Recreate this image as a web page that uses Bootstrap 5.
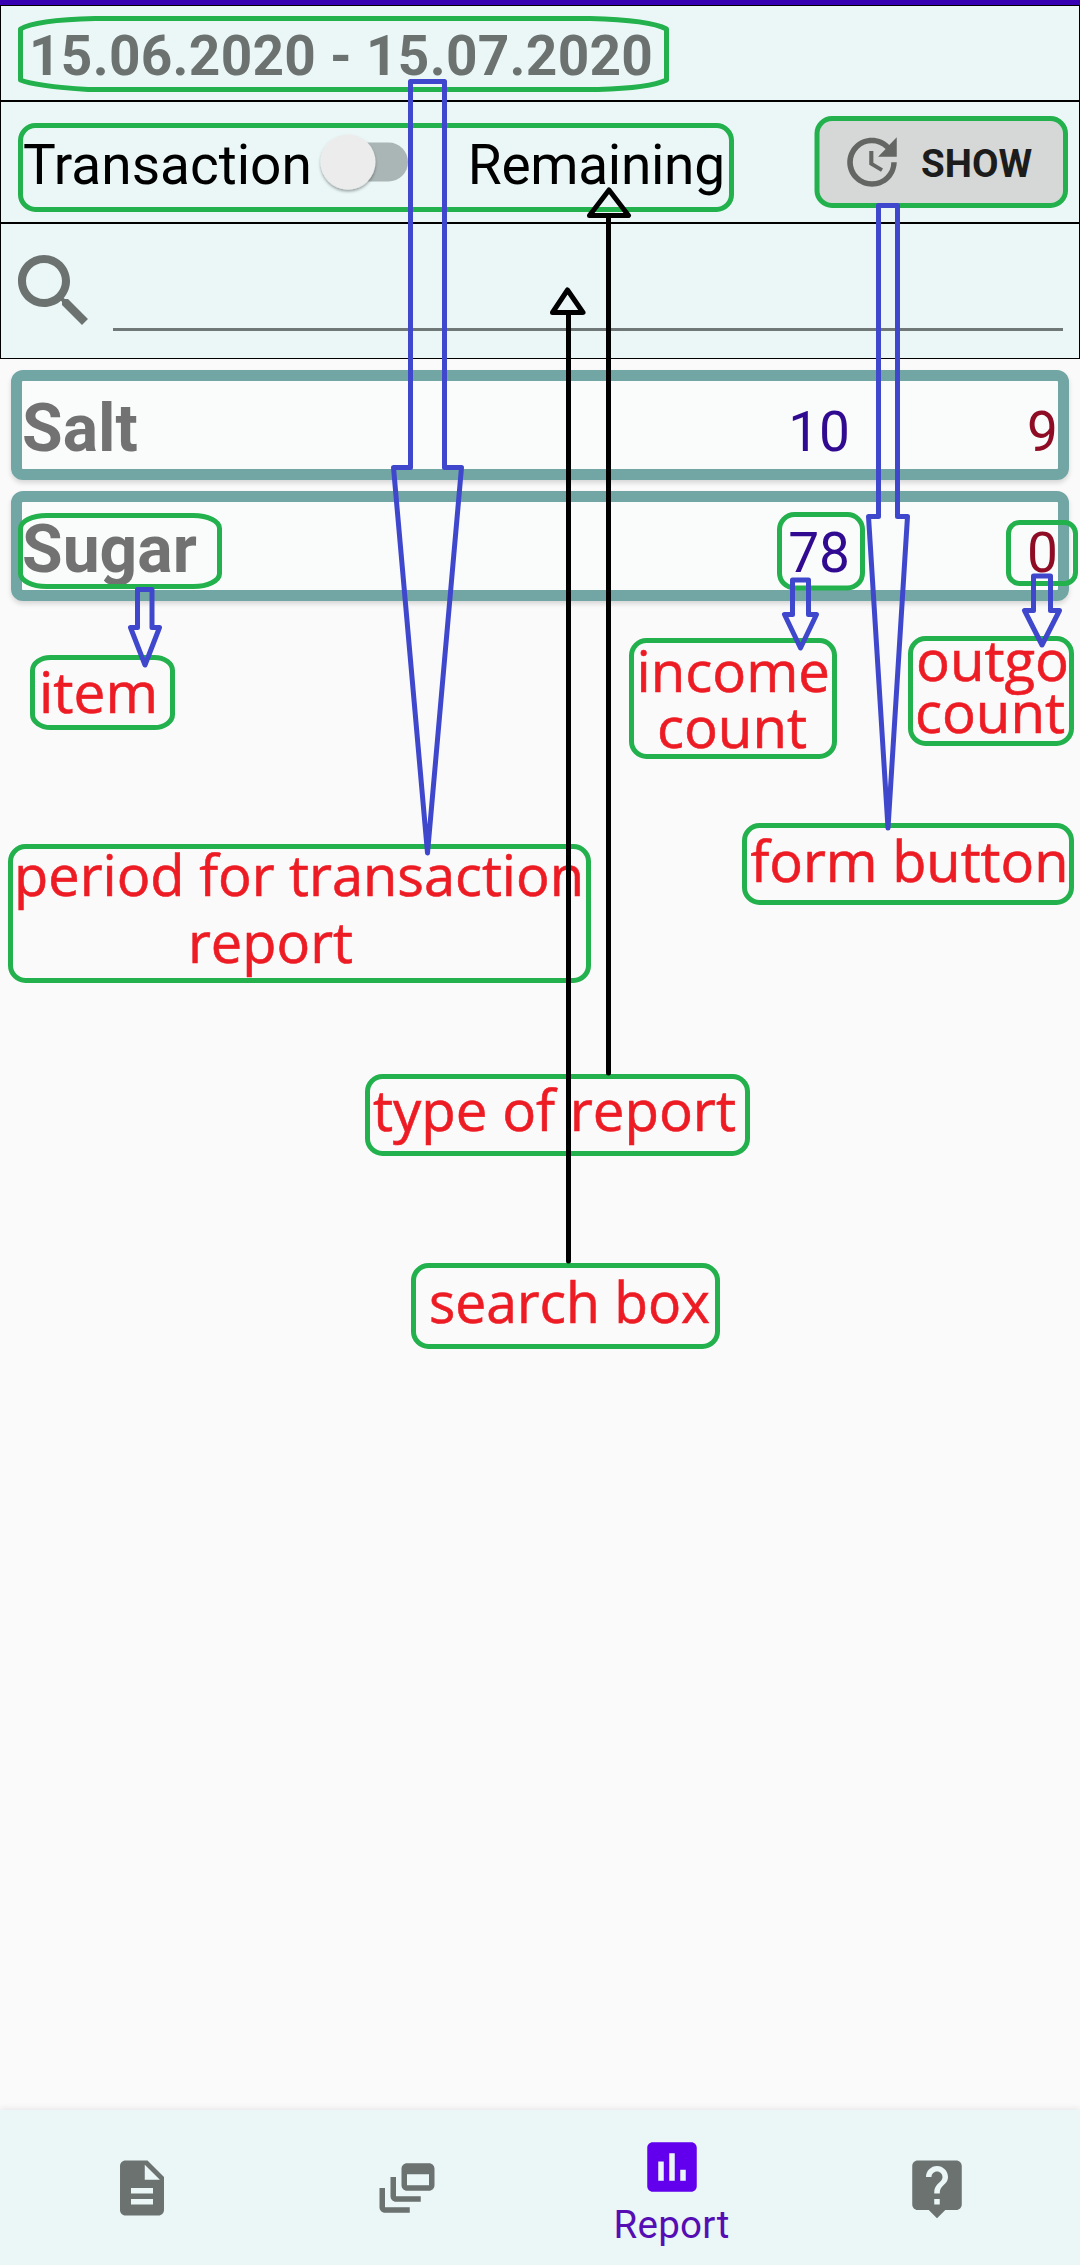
<!DOCTYPE html>
<html lang="en">
<head>
<meta charset="utf-8">
<meta name="viewport" content="width=device-width, initial-scale=1">
<title>Report</title>
<link href="https://cdn.jsdelivr.net/npm/bootstrap@5.3.0/dist/css/bootstrap.min.css" rel="stylesheet">
<style>
  body { font-family: Roboto, sans-serif; background: #fafafa; color: #000; }
  .screen { width: 1080px; height: 2265px; }
  .status-strip { height: 5px; background: #3700b3; }
  .panel { background: #ebf7f7; border: 1px solid #000; }
  .panel-period { height: 96px; padding: 17px 0 0 28px; }
  .panel-type { height: 122px; padding-left: 22px; padding-right: 16px; }
  .panel-search { height: 136px; padding: 0 16px 0 5px; }
  .period { font-size: 55px; font-weight: 700; color: #6b7270; line-height: 66px; letter-spacing: .28px; }
  .type-label { font-size: 55px; line-height: 66px; padding-top: 5px; }
  .type-label + .toggle-gap + .type-label, .label-right { letter-spacing: -.3px; }
  .toggle { width: 92px; height: 64px; margin-left: 5px; }
  .toggle-gap { width: 59px; }
  .btn-show { width: 244px; height: 84px; margin-bottom: 2px; background: #d6d8d7; color: #1c1c1c; border-radius: 12px; font-size: 38.5px; font-weight: 700; padding: 0 0 0 20px; border: 0; }
  .btn-show svg { fill: #646664; margin: 2px 16px 0 0; }
  .btn-show span { padding-top: 5px; }
  .search-line { height: 3px; background: #6f7877; margin: 76px 0 0 11px; }
  .items { padding: 11px 11px 0 11px; gap: 11px; }
  .item-card { height: 110px; border: 11px solid #72a6a5; border-radius: 12px; background: #fafbfb; box-shadow: 0 3px 5px rgba(0,0,0,.14); padding: 15px 0 0 0; }
  .item-name { font-size: 66px; font-weight: 700; color: #727272; line-height: 66px; width: 500px; }
  .item-num { font-size: 55px; line-height: 66px; }
  .num-in { color: #300a90; width: 328px; }
  .num-out { color: #8e0c24; }
  .bottom-bar { height: 155px; background: #ebf7f7; padding: 0 11px 0 9px; box-shadow: 0 -2px 6px rgba(0,0,0,.07); }
  .bottom-bar svg { fill: #6b7270; }
  .bottom-bar .nav-link { padding: 0; }
  .bottom-bar .active { padding-top: 24px; }
  .bottom-bar .active svg { fill: #6200ee; }
  .nav-caption { font-size: 38.5px; line-height: 44px; color: #560eb4; margin-top: 3px; letter-spacing: .3px; }
  .notes { width: 1080px; height: 2265px; pointer-events: none; fill: none; stroke-width: 5; }
  .notes .frames { stroke: #22b14c; }
  .notes .arrows { stroke: #3f48cc; stroke-linejoin: round; }
  .notes .pointers { stroke: #000; stroke-linejoin: round; stroke-linecap: round; }
  .notes text { fill: #ed1c24; stroke: #ed1c24; stroke-width: .6; font-family: "Open Sans", sans-serif; font-size: 56px; }
</style>
<script src="https://cdn.jsdelivr.net/npm/bootstrap@5.3.0/dist/js/bootstrap.bundle.min.js"></script>
</head>
<body>
<div class="screen position-relative d-flex flex-column overflow-hidden">
  <div class="status-strip"></div>
  <header>
    <div class="panel panel-period d-flex align-items-start">
      <div class="period">15.06.2020 - 15.07.2020</div>
    </div>
    <div class="panel panel-type d-flex align-items-center">
      <span class="type-label">Transaction</span>
      <svg class="toggle" viewBox="0 0 92 64">
        <defs><filter id="knobShadow" x="-20%" y="-20%" width="140%" height="150%"><feDropShadow dx="0" dy="2" stdDeviation="1.8" flood-opacity=".35"/></filter></defs>
        <rect x="8" y="12.500" width="83" height="39" rx="19.500" fill="#aab6b6"/>
        <circle cx="31" cy="32" r="27.500" fill="#ececec" filter="url(#knobShadow)"/>
      </svg>
      <span class="toggle-gap"></span>
      <span class="type-label label-right">Remaining</span>
      <button type="button" class="btn btn-show ms-auto d-flex align-items-center">
        <svg width="66" height="66" viewBox="0 0 24 24"><path d="M21 10.120h-6.780l2.740-2.820c-2.730-2.700-7.150-2.800-9.880-.100-2.730 2.710-2.730 7.080 0 9.790s7.150 2.710 9.880 0C18.320 15.650 19 14.080 19 12.100h2c0 1.980-.880 4.550-2.640 6.290-3.510 3.480-9.210 3.480-12.720 0-3.500-3.470-3.530-9.110-.020-12.580s9.140-3.470 12.650 0L21 3v7.120zM12.500 8v4.250l3.500 2.080-.720 1.210L11 13V8h1.500z"/></svg>
        <span>SHOW</span>
      </button>
    </div>
    <div class="panel panel-search d-flex align-items-center">
      <svg width="96" height="96" viewBox="0 0 24 24" fill="#6b7270"><path d="M15.500 14h-.790l-.280-.270C15.410 12.590 16 11.110 16 9.500 16 5.910 13.090 3 9.500 3S3 5.910 3 9.500 5.910 16 9.500 16c1.610 0 3.090-.590 4.230-1.570l.270.280v.790l5 4.990L20.490 19l-4.990-5zm-6 0C7.010 14 5 11.990 5 9.500S7.010 5 9.500 5 14 7.010 14 9.500 11.990 14 9.500 14z"/></svg>
      <div class="search-line flex-grow-1"></div>
    </div>
  </header>

  <main class="items d-flex flex-column flex-grow-1">
    <div class="item-card d-flex align-items-baseline">
      <div class="item-name">Salt</div>
      <div class="item-num num-in text-end">10</div>
      <div class="item-num num-out text-end flex-grow-1">9</div>
    </div>
    <div class="item-card d-flex align-items-baseline">
      <div class="item-name">Sugar</div>
      <div class="item-num num-in text-end">78</div>
      <div class="item-num num-out text-end flex-grow-1">0</div>
    </div>
  </main>

  <nav class="bottom-bar nav nav-fill flex-nowrap">
    <a class="nav-link w-25 d-flex align-items-center justify-content-center" href="#" aria-label="Documents">
      <svg width="66" height="66" viewBox="0 0 24 24"><path d="M14 2H6c-1.100 0-1.990.9-1.990 2L4 20c0 1.100.890 2 1.990 2H18c1.100 0 2-.900 2-2V8l-6-6zm2 16H8v-2h8v2zm0-4H8v-2h8v2zm-3-5V3.500L18.500 9H13z"/></svg>
    </a>
    <a class="nav-link w-25 d-flex align-items-center justify-content-center" href="#" aria-label="Feed">
      <svg width="66" height="66" viewBox="0 0 24 24"><path d="M8 8H6v7c0 1.100.900 2 2 2h9v-2H8V8zM20 3h-8c-1.100 0-2 .900-2 2v6c0 1.100.900 2 2 2h8c1.100 0 2-.900 2-2V5c0-1.100-.900-2-2-2zm0 8h-8V7h8v4zM4 12H2v7c0 1.100.900 2 2 2h9v-2H4v-7z"/></svg>
    </a>
    <a class="nav-link active w-25 d-flex flex-column align-items-center" href="#">
      <svg width="66" height="66" viewBox="0 0 24 24"><path d="M19 3H5c-1.100 0-2 .900-2 2v14c0 1.100.900 2 2 2h14c1.100 0 2-.900 2-2V5c0-1.100-.900-2-2-2zM9 17H7v-7h2v7zm4 0h-2V7h2v10zm4 0h-2v-4h2v4z"/></svg>
      <span class="nav-caption">Report</span>
    </a>
    <a class="nav-link w-25 d-flex align-items-center justify-content-center" href="#" aria-label="Help">
      <svg width="66" height="66" viewBox="0 0 24 24"><path d="M19 2H5c-1.110 0-2 .900-2 2v14c0 1.100.890 2 2 2h4l3 3 3-3h4c1.100 0 2-.900 2-2V4c0-1.100-.900-2-2-2zm-6 16h-2v-2h2v2zm2.070-7.750l-.900.920C13.450 11.900 13 12.500 13 14h-2v-.500c0-1.100.450-2.100 1.170-2.830l1.240-1.260c.370-.360.590-.860.590-1.410 0-1.100-.900-2-2-2s-2 .900-2 2H8c0-2.210 1.790-4 4-4s4 1.790 4 4c0 .880-.360 1.680-.930 2.250z"/></svg>
    </a>
  </nav>

  <!-- Explanatory callouts laid over the screen -->
  <svg class="notes position-absolute top-0 start-0" viewBox="0 0 1080 2265">
    <g class="frames">
      <path d="M95 18.500H590Q650 20 666.500 29V80Q650 88 598 89.500H88Q35 86 20.500 80V29Q35 20 95 18.500Z" stroke-linejoin="round"/>
      <rect x="20.500" y="125.500" width="711" height="84" rx="15"/>
      <rect x="817" y="118.500" width="248.500" height="87" rx="15"/>
      <rect x="20.500" y="515.500" width="199" height="71" rx="26" ry="13"/>
      <rect x="32.500" y="657.500" width="140" height="70" rx="18" ry="13"/>
      <rect x="779.500" y="514.500" width="83" height="73.500" rx="15"/>
      <rect x="1008.500" y="522.500" width="67" height="61" rx="11"/>
      <rect x="631.500" y="640.500" width="203" height="116" rx="15"/>
      <rect x="910.500" y="638.500" width="161" height="105" rx="15"/>
      <rect x="10.500" y="846.500" width="578" height="134" rx="15"/>
      <rect x="744.500" y="825.500" width="327" height="77" rx="15"/>
      <rect x="367.500" y="1076.500" width="380" height="77" rx="15"/>
      <rect x="413.500" y="1265.500" width="304" height="81" rx="15"/>
    </g>
    <g>
      <text x="39" y="712.500" textLength="119" lengthAdjust="spacingAndGlyphs">item</text>
      <text x="636.500" y="692" textLength="193.500" lengthAdjust="spacingAndGlyphs">income</text>
      <text x="657" y="748" textLength="150" lengthAdjust="spacingAndGlyphs">count</text>
      <text x="916" y="681" textLength="153" lengthAdjust="spacingAndGlyphs">outgo</text>
      <text x="915" y="733" textLength="150" lengthAdjust="spacingAndGlyphs">count</text>
      <text x="14" y="896" textLength="570" lengthAdjust="spacingAndGlyphs">period for transaction</text>
      <text x="188" y="963" textLength="165" lengthAdjust="spacingAndGlyphs">report</text>
      <text x="750.500" y="882" textLength="318" lengthAdjust="spacingAndGlyphs">form button</text>
      <text x="373" y="1131" textLength="363" lengthAdjust="spacingAndGlyphs">type of report</text>
      <text x="429" y="1322.500" textLength="281" lengthAdjust="spacingAndGlyphs">search box</text>
    </g>
    <g class="arrows">
      <path d="M410.500 81.500H444.500V467.500H461.500L427.500 853L393.500 467.500H410.500Z"/>
      <path d="M878.500 205.500H897.500V516.500H907.500L888 828L868.500 516.500H878.500Z"/>
      <path d="M137.500 589.500H152V627.500H159.500L145 665L130.500 627.500H137.500Z"/>
      <path d="M792.500 580H808.500V614.500H816.500L800.500 648L784.500 614.500H792.500Z"/>
      <path d="M1033.500 576H1050.500V610.500H1059.500L1042 645L1024.500 610.500H1033.500Z"/>
    </g>
    <g class="pointers">
      <path d="M609 190L628.500 215.500H589.500ZM608.500 215.500V1073"/>
      <path d="M567.500 290L583 312.500H552.500ZM568.500 312.500V1261"/>
    </g>
  </svg>
</div>
</body>
</html>
